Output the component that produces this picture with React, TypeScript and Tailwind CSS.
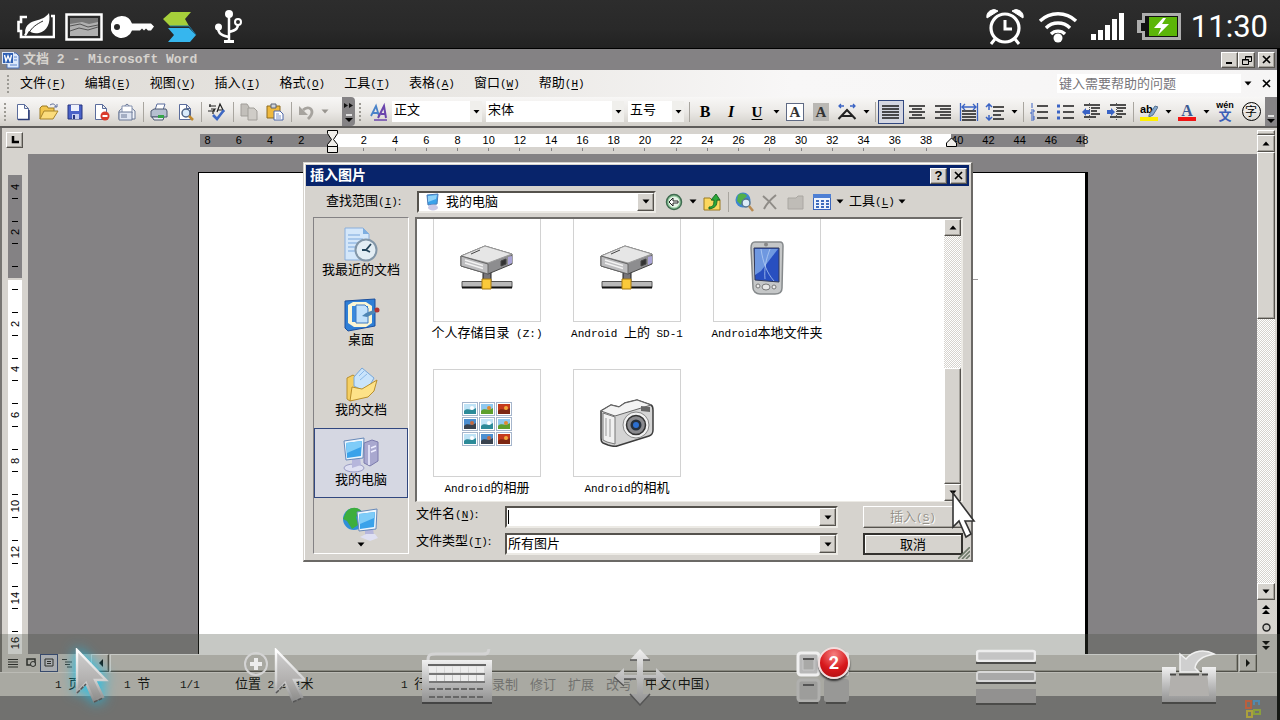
import type { ReactNode } from "react";

const RAISED =
  "border border-t-white border-l-white border-r-[#55524d] border-b-[#55524d] bg-[#d6d3ce] shadow-[inset_-1px_-1px_0_#a5a29c]";
const SUNKEN = "border-2 border-t-[#55524d] border-l-[#55524d] border-r-[#eceae5] border-b-[#eceae5] bg-white";
const DOTTED = "bg-[repeating-conic-gradient(#ffffff_0%_25%,#d6d3ce_0%_50%)] bg-[length:2px_2px]";
const CN = "font-['Liberation_Serif','Noto_Sans_CJK_SC',sans-serif]";

type Kids = { children?: ReactNode };

function Draw({ w, h, children, label }: Kids & { w: number; h: number; label?: string }) {
  return (
    <svg width={w} height={h} viewBox={`0 0 ${w} ${h}`} fill="none" aria-label={label} className="block shrink-0">
      {children}
    </svg>
  );
}

function Key({ k }: { k: string }) {
  return (
    <span className="font-['Liberation_Mono',monospace] text-[11px]">
      (<span className="underline underline-offset-2">{k}</span>)
    </span>
  );
}

/* Latin runs are set in the half-width face, Chinese runs in the full-width one. */
function Mixed({ text }: { text: string }) {
  return (
    <>
      {text.split(/([\x20-\x7e]+)/).map((part, i) =>
        i % 2 ? (
          <span key={i} className="whitespace-pre font-['Liberation_Mono',monospace] text-[11px]">
            {part}
          </span>
        ) : (
          part
        ),
      )}
    </>
  );
}

function Down({ color = "#000" }: { color?: string }) {
  return (
    <Draw w={8} h={5}>
      <path d="M0.5 0.5h7L4 4.5z" fill={color} />
    </Draw>
  );
}

function Up() {
  return (
    <Draw w={8} h={5}>
      <path d="M0.5 4.5h7L4 0.5z" fill="#000" />
    </Draw>
  );
}

/* ---------- device status bar ---------- */

function DeviceBar() {
  return (
    <header className="flex h-[49px] shrink-0 items-center border-b border-black bg-[linear-gradient(#2d2d2d,#292929_60%,#222)] pl-[17px] pr-3 pt-[5px]">
      <div className="flex flex-1 items-center">
        <Draw w={38} h={28} label="Power saver">
          <path d="M10 4H4v5H1.5v9H4v6h33V3h-3" stroke="#fff" strokeWidth="2.6" />
          <path d="M8 20c0-9 6-11 13-13 5-1.500 8-3 11-7 2 10-2 18-10 20-5 1-8-.500-10-2l-3 5-2-1 3-5z" fill="#fff" />
          <path d="M12 20c3-6 8-9 14-12" stroke="#292929" strokeWidth="1" />
        </Draw>
        <div className="ml-[10px]">
          <Draw w={38} h={28} label="Gallery">
            <rect x="1.500" y="1.500" width="35" height="25" stroke="#fff" strokeWidth="2.500" />
            <rect x="5" y="5" width="28" height="18" fill="#b0b0b0" />
            <path d="M5 5h28v4l-9 2-7-2-12 2z" fill="#777" />
            <path d="M5 13l10-2 8 3 10-2M5 18l9-3 9 2 10-3" stroke="#555" />
          </Draw>
        </div>
        <div className="ml-[8px]">
          <Draw w={43} h={24} label="Key">
            <path d="M11 1a11 11 0 1 0 10 14.500h8l2-2 2 2 2-2 2 2h3l3-4-3-3H21A11 11 0 0 0 11 1z" fill="#fff" />
            <circle cx="6" cy="12" r="3" fill="#292929" />
          </Draw>
        </div>
        <div className="ml-[9px]">
          <Draw w={34} h={32} label="Sync">
            <path d="M8 1h20l-6 7 4 7H7L0 8z" fill="#a6cf3a" />
            <path d="M5 17h21l7 7-6 7H5l6-7z" fill="#36b6ee" />
            <path d="M7 15h19l7 9" stroke="#1d7da8" />
          </Draw>
        </div>
        <div className="ml-[18px]">
          <Draw w={28} h={34} label="USB">
            <path d="M14 5v27M14 27C4 25 3 22 3 17M14 22c8-2 9-4 9-8" stroke="#fff" strokeWidth="2.500" />
            <circle cx="14" cy="4" r="4" fill="#fff" />
            <circle cx="3.500" cy="17" r="3.500" fill="#fff" />
            <circle cx="23" cy="12" r="3" stroke="#fff" strokeWidth="2" />
            <path d="M9 31.500h10" stroke="#fff" strokeWidth="3" />
          </Draw>
        </div>
      </div>
      <Draw w={38} h={38} label="Alarm">
        <circle cx="19" cy="20" r="14" stroke="#fff" strokeWidth="3.200" />
        <path d="M19 12v9h7M9 31l-4 5M29 31l4 5" stroke="#fff" strokeWidth="3" />
        <path d="M1 10A7 7 0 0 1 12 3zM37 10A7 7 0 0 0 26 3z" fill="#fff" stroke="#fff" />
      </Draw>
      <div className="ml-[14px]">
        <Draw w={40} h={34} label="Wi-Fi">
          <path d="M2 11a26 26 0 0 1 36 0M8 18a17 17 0 0 1 24 0M13 24a10 10 0 0 1 14 0" stroke="#fff" strokeWidth="3.400" />
          <circle cx="20" cy="28" r="4.500" fill="#fff" />
        </Draw>
      </div>
      <div className="ml-[13px]">
        <Draw w={34} h={28} label="Signal">
          <path d="M0 21h5v6H0zM7 17h5v10H7zM14 12h5v15h-5zM21 6h5v21h-5zM28 0h5v27h-5z" fill="#fff" />
        </Draw>
      </div>
      <div className="ml-[12px]">
        <Draw w={44} h={27} label="Charging">
          <path d="M5 0h39v27H5v-7H0V7h5z" fill="#adadad" />
          <path d="M8 3h33v21H8v-6H4v-8h4z" fill="#111" />
          <path d="M12 4h28v19H12z" fill="#5cb508" />
          <path d="M26 5l-9 10h7l-3 7 11-11h-7l4-6z" fill="#fff" />
        </Draw>
      </div>
      <time className="ml-[10px] font-['Roboto',sans-serif] text-[31px] leading-[40px] text-white">11:30</time>
    </header>
  );
}

/* ---------- title + menus ---------- */

function CaptionButton({ label, children }: Kids & { label: string }) {
  return (
    <button aria-label={label} className={`flex h-[16px] w-[17px] items-center justify-center ${RAISED}`}>
      {children}
    </button>
  );
}

function Cross({ s = 9 }: { s?: number }) {
  return (
    <svg width={s} height={s} viewBox="0 0 9 9" className="block">
      <path d="M1 1l7 7M8 1L1 8" stroke="#000" strokeWidth="1.700" />
    </svg>
  );
}

function TitleBar() {
  return (
    <div className="flex h-[21px] shrink-0 items-center bg-[#848284] pl-[2px] pr-[2px]">
      <Draw w={18} h={18}>
        <path d="M5 2h9l3 3v12H5z" fill="#dce9fb" stroke="#4a70b8" />
        <path d="M12 6h3M12 9h3M8 14h7" stroke="#5c84cc" />
        <rect x="0.500" y="1.500" width="11" height="11" fill="#2f60b4" stroke="#dce6f6" />
        <path d="M2.500 4l1.500 6 2-5 2 5 1.500-6" stroke="#fff" strokeWidth="1.400" />
      </Draw>
      <h1 className="ml-[3px] flex-1 font-['Liberation_Mono','Noto_Sans_CJK_SC',monospace] text-[13px] font-bold leading-[20px] text-[#d6d3ce]">
        文档 2 - Microsoft Word
      </h1>
      <CaptionButton label="最小化">
        <Draw w={9} h={9}>
          <path d="M1 8h6" stroke="#000" strokeWidth="2" />
        </Draw>
      </CaptionButton>
      <CaptionButton label="还原">
        <Draw w={10} h={10}>
          <path d="M3.500 4V1.500h6v5H7M3 2h7M0.500 4.500h6v5h-6zM0 5h7" stroke="#000" />
        </Draw>
      </CaptionButton>
      <div className="ml-[3px]">
        <CaptionButton label="关闭">
          <Cross />
        </CaptionButton>
      </div>
    </div>
  );
}

const MENUS = [
  ["文件", "F"],
  ["编辑", "E"],
  ["视图", "V"],
  ["插入", "I"],
  ["格式", "O"],
  ["工具", "T"],
  ["表格", "A"],
  ["窗口", "W"],
  ["帮助", "H"],
];

function Grip() {
  return (
    <span className="flex w-[10px] shrink-0 justify-center">
      <span className="h-[18px] w-[2px] bg-[repeating-linear-gradient(#9c9a94_0_2px,transparent_2px_4px)]" />
    </span>
  );
}

function MenuBar() {
  return (
    <nav className="flex h-[27px] shrink-0 items-center bg-[linear-gradient(to_right,#dedbd6,#ebe9e6_40%,#f8f7f7_62%,#f6f5f5)] pl-[3px]">
      <Grip />
      <div className="ml-[7px] flex flex-1 gap-[19px]">
        {MENUS.map(([name, key]) => (
          <button key={key} className="whitespace-nowrap text-[13px] leading-[20px]">
            {name}
            <Key k={key} />
          </button>
        ))}
      </div>
      <input
        aria-label="帮助搜索"
        placeholder="键入需要帮助的问题"
        className="h-[19px] w-[184px] bg-white pl-[2px] text-[13px] leading-[19px] outline-none placeholder:text-[#77757a]"
      />
      <button aria-label="问题列表" className="flex w-[14px] justify-center">
        <Down />
      </button>
      <button aria-label="关闭文档" className="flex w-[22px] justify-center">
        <Cross />
      </button>
    </nav>
  );
}

/* ---------- toolbar ---------- */

function Tool({ label, children, pressed, arrow }: Kids & { label: string; pressed?: boolean; arrow?: boolean }) {
  return (
    <>
      <button
        aria-label={label}
        className={
          pressed
            ? "flex h-[24px] w-[26px] shrink-0 items-center justify-center border border-[#31477f] bg-[#d5d7e2]"
            : "flex h-[24px] w-[26px] shrink-0 items-center justify-center"
        }
      >
        {children}
      </button>
      {arrow && (
        <button aria-label={`${label}选项`} className="flex w-[12px] shrink-0 justify-center">
          <Draw w={7} h={4}>
            <path d="M0.500 0h6L3.500 3.500z" fill="#000" />
          </Draw>
        </button>
      )}
    </>
  );
}

function Sep() {
  return (
    <span className="flex w-[6px] shrink-0 justify-center">
      <span className="h-[20px] w-px bg-[#a8a59f]" />
    </span>
  );
}

function BarSelect({ label, value, size }: { label: string; value: string; size: string }) {
  return (
    <span className={`grid h-[21px] shrink-0 grid-cols-[1fr_12px] items-center bg-white ${size}`}>
      <select
        aria-label={label}
        className="col-span-2 col-start-1 row-start-1 h-[21px] w-full appearance-none bg-transparent pb-[3px] pl-[2px] text-[13px] leading-[18px] outline-none"
      >
        <option>{value}</option>
      </select>
      <span className="pointer-events-none col-start-2 row-start-1 flex h-full items-center justify-center bg-[#f0efec]">
        <Draw w={7} h={4}>
          <path d="M0.500 0h6L3.500 3.500z" fill="#000" />
        </Draw>
      </span>
    </span>
  );
}

function Sheet() {
  return <path d="M4.500 2.500h7l4 4v11h-11z M11.500 2.500v4h4" fill="#fff" stroke="#5a6c9c" />;
}

function Lines({ d, extra }: { d: string; extra?: ReactNode }) {
  return (
    <Draw w={20} h={18}>
      <path d={d} stroke="#1a1a1a" strokeWidth="1.600" />
      {extra}
    </Draw>
  );
}

function ToolBar() {
  return (
    <div className="flex h-[31px] shrink-0 items-center overflow-hidden border-b-2 border-[#5e5c5a] bg-[linear-gradient(#f8f7f6,#ebe9e6_50%,#d2cfc9)]">
      <Grip />
      <Tool label="新建"><Draw w={20} h={20}><Sheet /><path d="M5 17.500h11V8" stroke="#2c3d77" strokeWidth="1.500" /></Draw></Tool>
      <Tool label="打开">
        <Draw w={20} h={20}>
          <path d="M1 17V6l2-2h5l1 2h6v3" fill="#f2c64e" stroke="#9c7a22" />
          <path d="M1 17L5 9h14l-5 8z" fill="#fbdc7c" stroke="#a8842a" />
          <path d="M11 3c3-2 5-1 6 2M15 5h3V2" stroke="#5f6f9c" />
        </Draw>
      </Tool>
      <Tool label="保存">
        <Draw w={20} h={20}>
          <path d="M3 3h14v14H3z" fill="#4a62c8" stroke="#27357f" />
          <path d="M6 3h8v6H6z" fill="#eef1fb" />
          <path d="M7 12h7v5H7z" fill="#c5cdef" />
          <path d="M8 13h2v4H8z" fill="#27357f" />
        </Draw>
      </Tool>
      <Tool label="权限"><Draw w={20} h={20}><Sheet /><circle cx="14" cy="14" r="4.500" fill="#d83a2c" /><path d="M11.500 14h5" stroke="#fff" strokeWidth="2" /></Draw></Tool>
      <Tool label="电子邮件">
        <Draw w={20} h={20}>
          <path d="M2 9l8-7 8 7v8H2z" fill="#f3f5fa" stroke="#6b7896" />
          <path d="M5 4h10v7H5z" fill="#fff" stroke="#8390ae" />
          <path d="M2 10h13v8H2z" fill="#dfe5f1" stroke="#6b7896" />
          <path d="M4 13h6M4 15h6" stroke="#6b7896" />
        </Draw>
      </Tool>
      <Sep />
      <Tool label="打印">
        <Draw w={20} h={20}>
          <path d="M6 8l2-6h8l-2 6z" fill="#fff" stroke="#5a6c9c" />
          <path d="M2 9l3-2h12l1 2v6H2z" fill="#b5bfd0" stroke="#4c5870" />
          <path d="M3 15h12l-1 3H5z" fill="#e7ecf4" stroke="#4c5870" />
          <path d="M9 13h6v3H9z" fill="#35a548" />
        </Draw>
      </Tool>
      <Tool label="打印预览">
        <Draw w={20} h={20}>
          <Sheet />
          <circle cx="11" cy="11" r="4" fill="#d9ebfb" stroke="#4f6384" strokeWidth="1.500" />
          <path d="M14 14l4 4" stroke="#c28a2e" strokeWidth="2.500" />
        </Draw>
      </Tool>
      <Sep />
      <Tool label="拼写检查">
        <Draw w={20} h={20}>
          <path d="M2 4h7M3 2v3M4 7h4l-2 2v3M1 9h7M10 10l3-8 4 8M11 8h5" stroke="#222" strokeWidth="1.200" />
          <path d="M6 13l4 4 7-9" stroke="#3d68c4" strokeWidth="2.600" />
        </Draw>
      </Tool>
      <Sep />
      <Tool label="复制">
        <Draw w={20} h={20}>
          <path d="M2 2h6l2 3v9H2z" fill="#c2bfba" stroke="#a19e99" />
          <path d="M9 6h6l3 3v9H9z" fill="#cfccc7" stroke="#a19e99" />
        </Draw>
      </Tool>
      <Tool label="粘贴">
        <Draw w={20} h={20}>
          <path d="M2 4h13v12H2z" fill="#efb93e" stroke="#8d6b1f" />
          <path d="M6 2h5v4H6z" fill="#cfd4dc" stroke="#5c6474" />
          <path d="M9 9h6l3 3v6H9z" fill="#fff" stroke="#4c66a8" />
          <path d="M11 12h3M11 14h5M11 16h5" stroke="#7e95c8" />
        </Draw>
      </Tool>
      <Sep />
      <button aria-label="撤消" className="flex w-[24px] shrink-0 justify-center">
        <Draw w={16} h={16}>
          <path d="M5 6c4-4 9-2 9 2 0 3-2 5-4 7" stroke="#a6a39e" strokeWidth="2.800" />
          <path d="M1 2v9h9z" fill="#a6a39e" />
        </Draw>
      </button>
      <span className="flex w-[14px] shrink-0 justify-center"><Down color="#98958f" /></span>
      <button aria-label="更多按钮" className="ml-[10px] flex h-full w-[13px] shrink-0 flex-col items-center justify-end gap-[6px] rounded-r bg-[#858385] pb-[4px]">
        <Draw w={9} h={5}><path d="M0 0l4 2.500L0 5zM5 0l4 2.500L5 5z" fill="#111" /></Draw>
        <Draw w={8} h={8}><path d="M1 1h6" stroke="#fff" strokeWidth="1.500" /><path d="M0 4h8L4 8z" fill="#000" /></Draw>
      </button>
      <Grip />
      <button aria-label="样式和格式" className="flex w-[27px] shrink-0 justify-center">
        <Draw w={20} h={20}>
          <path d="M2 14l5-10 3 10M4 11h5" stroke="#4a83c9" strokeWidth="1.800" />
          <path d="M9 16l6-12 2 12M12 12h5" stroke="#6a45ac" strokeWidth="2" />
          <path d="M5 18h13" stroke="#6a45ac" strokeWidth="1.500" />
        </Draw>
      </button>
      <BarSelect label="样式" value="正文" size="w-[90px]" />
      <span className="w-[4px] shrink-0" />
      <BarSelect label="字体" value="宋体" size="w-[138px]" />
      <span className="w-[4px] shrink-0" />
      <BarSelect label="字号" value="五号" size="w-[56px]" />
      <span className="w-[2px] shrink-0" />
      <Sep />
      <Tool label="加粗"><b className="font-['Liberation_Serif',serif] text-[16px] font-black leading-[20px]">B</b></Tool>
      <Tool label="倾斜"><i className="font-['Liberation_Serif',serif] text-[16px] font-bold leading-[20px]">I</i></Tool>
      <Tool label="下划线" arrow><span className="font-['Liberation_Serif',serif] text-[15px] font-bold leading-[20px] underline underline-offset-2">U</span></Tool>
      <Tool label="字符边框">
        <span className="h-[18px] w-[18px] border border-[#5f6a84] bg-white text-center font-['Liberation_Serif',serif] text-[15px] font-bold leading-[16px] text-[#333]">A</span>
      </Tool>
      <Tool label="字符底纹">
        <span className="h-[18px] w-[16px] bg-[#bab8b4] text-center font-['Liberation_Serif',serif] text-[15px] font-bold leading-[18px] text-[#333]">A</span>
      </Tool>
      <Tool label="字符缩放" arrow>
        <Draw w={20} h={18}>
          <path d="M1.500 16L10 7l8.500 9M5 13h10" stroke="#222" strokeWidth="2" />
          <path d="M2 3h5M13 3h5M4 1L2 3l2 2M16 1l2 2-2 2" stroke="#3a63c4" strokeWidth="1.300" />
        </Draw>
      </Tool>
      <Sep />
      <Tool label="两端对齐" pressed><Lines d="M1 3h17M1 6h17M1 9h17M1 12h17M1 15h17" /></Tool>
      <Tool label="居中"><Lines d="M2 3h16M5 6h10M2 9h16M5 12h10M2 15h16" /></Tool>
      <Tool label="右对齐"><Lines d="M2 3h16M7 6h11M2 9h16M7 12h11M2 15h16" /></Tool>
      <Tool label="分散对齐">
        <Lines d="M3 8h14M3 11h14M3 14h14M3 17h14" extra={<path d="M1.500 0v18M18.500 0v18M3 4h14M6 1L3 4l3 3M14 1l3 3-3 3" stroke="#3a63c4" strokeWidth="1.300" />} />
      </Tool>
      <Tool label="行距" arrow>
        <Lines d="M8 4h11M8 8h11M8 12h8M8 16h11" extra={<path d="M4 2v5M4 12v5M1 4l3-3 3 3M1 14l3 3 3-3" stroke="#3a63c4" strokeWidth="1.500" />} />
      </Tool>
      <Sep />
      <Tool label="编号"><Lines d="M8 3h11M8 9h11M8 15h11" extra={<path d="M3 0v5M2 7h3v2H2v2h3M2 13h3v4H2M2 15h3" stroke="#3a63c4" />} /></Tool>
      <Tool label="项目符号">
        <Lines d="M8 3h11M8 9h11M8 15h11" extra={<path d="M2 1.500h3v3H2zM2 7.500h3v3H2zM2 13.500h3v3H2z" fill="#3a63c4" />} />
      </Tool>
      <Tool label="减少缩进">
        <Lines
          d="M3 2h16M10 5h9M10 8h6M10 11h9M3 14h12"
          extra={<><path d="M8.500 0v18" stroke="#555" strokeDasharray="1 1" /><path d="M9 7v4H5v2L1 9l4-4v2z" fill="#3a63c4" /></>}
        />
      </Tool>
      <Tool label="增加缩进">
        <Lines
          d="M3 2h16M10 5h9M10 8h6M10 11h9M3 14h12"
          extra={<><path d="M9.500 0v18" stroke="#555" strokeDasharray="1 1" /><path d="M0 7v4h4v2l4-4-4-4v2z" fill="#3a63c4" /></>}
        />
      </Tool>
      <Sep />
      <Tool label="突出显示" arrow>
        <span className="grid">
          <span className="col-start-1 row-start-1 h-[14px] text-left font-['Liberation_Sans',sans-serif] text-[11px] font-bold leading-[12px]">ab</span>
          <span className="col-start-1 row-start-1">
            <Draw w={18} h={18}>
              <path d="M9 12l6-9 3 1-5 8-4 2z" fill="#86a8cf" stroke="#55708e" />
              <path d="M0 14h18v4H0z" fill="#ffef00" />
            </Draw>
          </span>
        </span>
      </Tool>
      <Tool label="字体颜色" arrow>
        <span className="flex flex-col items-center">
          <span className="h-[14px] font-['Liberation_Serif',serif] text-[16px] font-bold leading-[15px] text-[#3c5a94]">A</span>
          <span className="h-[4px] w-[18px] bg-[#f01414]" />
        </span>
      </Tool>
      <Tool label="拼音指南">
        <span className="flex flex-col items-center">
          <span className="h-[8px] font-['Liberation_Sans',sans-serif] text-[9px] font-bold leading-[7px]">wén</span>
          <span className="text-[13px] font-bold leading-[12px] text-[#3b5fb8]">文</span>
        </span>
      </Tool>
      <Tool label="带圈字符">
        <span className="flex h-[19px] w-[19px] items-center justify-center rounded-full border border-black text-[12px] leading-[16px]">字</span>
      </Tool>
      <button aria-label="工具栏选项" className="ml-auto flex h-full w-[12px] shrink-0 flex-col items-center justify-end bg-[#858385] pb-[3px]">
        <Draw w={8} h={8}><path d="M1 1h6" stroke="#fff" strokeWidth="1.500" /><path d="M0 4h8L4 8z" fill="#000" /></Draw>
      </button>
    </div>
  );
}

/* ---------- rulers and page ---------- */

const H_MARKS = Array.from({ length: 29 }, (_, i) => (i - 4) * 2);
const V_MARKS = Array.from({ length: 11 }, (_, i) => (i - 2) * 2);

function HorizontalRuler() {
  return (
    <div className="flex h-[26px] shrink-0">
      <div className="w-[198px] shrink-0 pl-[4px] pt-[4px]">
        <button aria-label="制表符" className={`flex h-[16px] w-[17px] items-center justify-center ${RAISED}`}>
          <Draw w={8} h={8}><path d="M2 0v6h6" stroke="#000" strokeWidth="2.500" /></Draw>
        </button>
      </div>
      <div className="relative mt-[6px] h-[13px] w-[885px] shrink-0 bg-[linear-gradient(to_right,#848284_132px,#fff_132px,#fff_751px,#848284_751px)]">
        <div className="-ml-2 -mr-[13px] flex">
          {H_MARKS.map((n) => (
            <div key={n} className="flex flex-1 flex-col items-center">
              <span className="h-[14px] font-['Liberation_Sans',sans-serif] text-[11px] leading-[13px] text-black">{n === 0 ? "" : Math.abs(n)}</span>
              <span className={n > 0 && n < 40 ? "h-[3px] w-px bg-[#848284]" : "h-[3px]"} />
            </div>
          ))}
        </div>
        <span className="absolute -top-[4px] left-[127px]">
          <Draw w={11} h={24}>
            <path d="M0.500 0.500h10v3l-4 6 4 5v2h-10v-2l4-5-4-6zM0.500 16.500h10v6h-10z" fill="#f0eeea" stroke="#000" />
          </Draw>
        </span>
        <span className="absolute left-[746px] top-[3px]">
          <Draw w={11} h={10}><path d="M0.500 9.500V6L5.500 1l5 5v3.500z" fill="#f0eeea" stroke="#000" /></Draw>
        </span>
      </div>
    </div>
  );
}

function VerticalRuler() {
  return (
    <div className="w-[26px] shrink-0 overflow-hidden pl-[6px] pt-[21px]">
      <div className="h-[490px] w-[14px] overflow-hidden bg-[linear-gradient(#848284_103px,#d6d3ce_103px,#d6d3ce_105px,#fff_105px)]">
        <div className="-mt-[11px] flex h-[502px] flex-col">
          {V_MARKS.map((n, i) => (
            <div key={n} className="flex flex-1 flex-col items-center justify-between py-[11px]">
              <span className={i === 0 ? "h-px w-[6px]" : "h-px w-[6px] bg-black"} />
              <span className="flex h-[8px] -rotate-90 items-center font-['Liberation_Sans',sans-serif] text-[11px] leading-[8px]">
                {n === 0 ? "" : Math.abs(n)}
              </span>
              <span className="h-px w-[6px] bg-black" />
            </div>
          ))}
        </div>
      </div>
    </div>
  );
}

function VerticalScroll() {
  return (
    <div className="flex w-[18px] shrink-0 flex-col bg-[#d6d3ce]">
      <span className={`mt-[2px] h-[5px] ${RAISED}`} />
      <button aria-label="向上滚动" className={`flex h-[17px] items-center justify-center ${RAISED}`}><Up /></button>
      <div className={`min-h-0 flex-1 ${DOTTED}`}>
        <div className={`h-[167px] ${RAISED}`} />
      </div>
      <button aria-label="向下滚动" className={`flex h-[17px] items-center justify-center ${RAISED}`}><Down /></button>
      <button aria-label="上一页" className="flex h-[18px] items-center justify-center">
        <Draw w={8} h={9}><path d="M0 4l4-4 4 4zM0 9l4-4 4 4z" fill="#000" /></Draw>
      </button>
      <button aria-label="选择浏览对象" className="flex h-[18px] items-center justify-center">
        <Draw w={9} h={9}><circle cx="4.500" cy="4.500" r="3.500" fill="#c9c7c3" stroke="#222" strokeWidth="1.400" /></Draw>
      </button>
      <button aria-label="下一页" className="flex h-[18px] items-center justify-center">
        <Draw w={8} h={9}><path d="M0 0l4 4 4-4zM0 5l4 4 4-4z" fill="#000" /></Draw>
      </button>
    </div>
  );
}

function WorkArea() {
  return (
    <div className="flex min-h-0 flex-1 pr-[2px]">
      <div className="flex min-w-0 flex-1 flex-col overflow-hidden">
        <HorizontalRuler />
        <div className="flex min-h-0 flex-1">
          <VerticalRuler />
          <main className="flex min-w-0 flex-1 bg-[#848284] pl-[170px] pr-[169px] pt-[18px]">
            <article className="flex-1 border-l border-r-[3px] border-t border-black bg-white pt-[106px]">
              <div className="ml-auto mr-[107px] h-px w-[30px] bg-[#9c9a9c]" />
            </article>
          </main>
        </div>
      </div>
      <VerticalScroll />
    </div>
  );
}

function ViewBar() {
  return (
    <div className="flex h-[18px] shrink-0 items-stretch bg-[#d6d3ce] pl-[2px]">
      <button aria-label="普通视图" className="flex w-[18px] items-center justify-center">
        <Draw w={10} h={10}><path d="M0 1.500h10M0 4h10M0 6.500h10M0 9h10" stroke="#222" /></Draw>
      </button>
      <button aria-label="Web 版式" className="flex w-[18px] items-center justify-center">
        <Draw w={10} h={10}><path d="M1 1h8v6H1z" stroke="#222" strokeWidth="1.500" /><circle cx="7" cy="6" r="2.500" fill="#ddd" stroke="#222" /></Draw>
      </button>
      <button aria-label="页面视图" className="flex w-[18px] items-center justify-center border border-[#31477f] bg-[#d5d7e2]">
        <Draw w={10} h={10}><path d="M1 1h8v7H1zM3 3.500h4M3 5.500h4" stroke="#222" /></Draw>
      </button>
      <button aria-label="大纲视图" className="flex w-[18px] items-center justify-center">
        <Draw w={10} h={10}><path d="M0 1.500h5M3 4h7M3 6.500h5M5 9h5" stroke="#333" /></Draw>
      </button>
      <span className="w-[15px]" />
      <button aria-label="向左滚动" className={`flex w-[18px] items-center justify-center ${RAISED}`}>
        <Draw w={5} h={8}><path d="M5 0v8L1 4z" fill="#000" /></Draw>
      </button>
      <div className={`mx-[1px] flex-1 ${RAISED}`} />
      <button aria-label="向右滚动" className={`mr-[20px] flex w-[18px] items-center justify-center ${RAISED}`}>
        <Draw w={5} h={8}><path d="M0 0v8l4-4z" fill="#000" /></Draw>
      </button>
    </div>
  );
}

function StatusBar() {
  return (
    <footer className="flex h-[24px] shrink-0 items-center whitespace-nowrap border-t border-[#efede9] bg-[#d6d3ce] pl-[55px] text-[13px] leading-[20px]">
      <span className="w-[69px]"><Mixed text="1 页" /></span>
      <span className="w-[56px]"><Mixed text="1 节" /></span>
      <span className="w-[55px]"><Mixed text="1/1" /></span>
      <span className="w-[166px]"><Mixed text="位置 2.5厘米" /></span>
      <span className="w-[47px]"><Mixed text="1 行" /></span>
      <span className="w-[44px]"><Mixed text="1 列" /></span>
      <span className="flex gap-[12px] text-[#848284]">
        <span>录制</span>
        <span>修订</span>
        <span>扩展</span>
        <span>改写</span>
      </span>
      <span className="ml-[13px]"><Mixed text="中文(中国)" /></span>
    </footer>
  );
}

/* ---------- insert picture dialog ---------- */

function Computer({ globe }: { globe?: boolean }) {
  return (
    <Draw w={38} h={36}>
      {globe ? (
        <>
          <circle cx="12" cy="13" r="11" fill="#2f8fd8" />
          <path d="M4 6c5-6 12-5 15-1l-5 6 2 8-6 4-5-8-4-2z" fill="#3dae3c" />
        </>
      ) : (
        <>
          <path d="M22 6l8-3 6 2v19l-8 5-6-3z" fill="#a9a8cf" stroke="#7c7bac" />
          <path d="M27 8v20M29 11l5-2M29 15l5-2" stroke="#eef" strokeWidth="1.500" />
          <ellipse cx="12" cy="31" rx="10" ry="4" fill="#dfe0f2" stroke="#9a9cc4" />
        </>
      )}
      <g transform={globe ? "translate(13 2)" : undefined}>
        <path d="M10 20h8l1 8-9 3z" fill="#b6b6dc" />
        <path d="M2 4l20-3-1 20-17 2z" fill="#eef6fd" stroke="#6688b8" />
        <path d="M4 6l16-2-1 15-14 2z" fill="#3aa2ea" />
        <path d="M4 6l16-2-1 6-14 6z" fill="#7fccf8" />
        {globe && <path d="M5 29l6-3h9l3 4-8 3z" fill="#dfe0f2" />}
      </g>
    </Draw>
  );
}

function RecentIcon() {
  return (
    <Draw w={38} h={36}>
      <path d="M3 1h18l6 6v26H3z" fill="#d4e7fa" stroke="#8aaedb" />
      <path d="M21 1v6h6z" fill="#7eaee0" />
      <path d="M6 8h12M6 12h15M6 16h12M6 20h10M6 24h10" stroke="#7ba7dc" />
      <circle cx="24" cy="23" r="10.500" fill="#e3edf4" stroke="#8296a8" strokeWidth="2" />
      <path d="M29 17l-5 6h-4M24 23l4 2" stroke="#24445a" strokeWidth="1.800" />
    </Draw>
  );
}

function DesktopIcon() {
  return (
    <Draw w={38} h={36}>
      <path d="M3 4l30-2v27L6 34l-3-3z" fill="#2f7fd6" stroke="#1c4f9c" />
      <path d="M6 8l5-3h13l6 4v17l-6 4H12l-6-4z" fill="#fbf6d4" />
      <path d="M10 9h16v16H10z" fill="#3a8ade" />
      <path d="M14 8h9l3 3v15H14z" fill="#c2e2fc" stroke="#3c78c0" />
      <path d="M34 12l-10 4-4 3 5 1 10-5z" fill="#4f86b4" />
      <circle cx="35" cy="13" r="2.500" fill="#b03434" />
    </Draw>
  );
}

function DocsIcon() {
  return (
    <Draw w={38} h={36}>
      <path d="M5 11l6-3 4 3 10-3v12L8 34l-3-2z" fill="#f5cf62" stroke="#b98f2c" />
      <path d="M12 10l8-9 12 10-8 14-12-6z" fill="#c9e4fb" stroke="#79a7d8" />
      <path d="M17 9l5-5M18 13l7-6" stroke="#8bb9e8" />
      <path d="M8 34l2-14 10 2 15-9-3 11-6 6z" fill="#fde288" stroke="#b98f2c" />
    </Draw>
  );
}

function Place({ name, icon, active }: { name: string; icon: ReactNode; active?: boolean }) {
  return (
    <button
      className={
        active
          ? "flex h-[70px] flex-col items-center border border-[#31477f] bg-[#d5d7e2] pt-[8px]"
          : "flex h-[70px] flex-col items-center pt-[9px]"
      }
    >
      {icon}
      <span className="-mt-[1px] whitespace-nowrap text-[13px] leading-[16px]">{name}</span>
    </button>
  );
}

function DriveIcon() {
  return (
    <Draw w={54} h={46}>
      <path d="M23 26h8v10h-8z" fill="#77757a" stroke="#222" />
      <path d="M2 36.500h50v6H2z" fill="#b9b9b9" stroke="#555" />
      <path d="M2 42.500h50" stroke="#111" strokeWidth="2" />
      <path d="M22 34h9v10h-9z" fill="#fbca3a" stroke="#a87a10" />
      <path d="M1 11L25 1l27 8v10L28 29 1 21z" fill="#8d8d8f" stroke="#444" />
      <path d="M1 11L25 1l27 8-24 9z" fill="#e6e6e6" stroke="#9a9a9a" />
      <path d="M1 11l27 8v10L1 21z" fill="#bdbdbf" stroke="#666" />
      <path d="M5 15l18 5.500M5 18l18 5.500" stroke="#f2f2f2" strokeWidth="1.500" />
      <path d="M11 9l9-4M41 16l5-2v5l-5 2z" stroke="#444" fill="#333" />
      <path d="M48 12l4-1v7l-4 2z" fill="#a9a3d6" />
    </Draw>
  );
}

function PhoneIcon() {
  return (
    <Draw w={36} h={54}>
      <path d="M6 1h25c2 0 3 2 3 4l-1 42c0 4-3 6-7 6H11c-4 0-7-3-7-6L2 7c0-4 1-6 4-6z" fill="#c5c7c8" stroke="#868a8c" strokeWidth="1.500" />
      <circle cx="17" cy="3.500" r="2" fill="#888" />
      <path d="M5 7h25v34L6 39z" fill="#284fc0" stroke="#333b58" />
      <path d="M6 8h23L12 30l-6 4z" fill="#6f98e0" />
      <path d="M12 8c2 14 6 24 13 32M21 8c-4 10-6 20-5 30" stroke="#bcd4f6" opacity=".7" />
      <ellipse cx="17" cy="46" rx="4" ry="3" fill="#e8e8e8" stroke="#777" />
      <circle cx="9" cy="45" r="2" fill="#eee" stroke="#777" />
      <circle cx="25" cy="46" r="2" fill="#eee" stroke="#777" />
    </Draw>
  );
}

const PHOTOS = ["sea", "green", "red", "dusk", "sea", "green", "sea", "dusk", "red"];
const PHOTO_COLORS: Record<string, [string, string, string]> = {
  sea: ["#bfe3f6", "#2c8a98", "#ffffff"],
  green: ["#8fc8ef", "#5d9f2c", "#e08a30"],
  red: ["#c43a1c", "#7c2612", "#f0a93c"],
  dusk: ["#4b8ed0", "#39424e", "#c46a40"],
};

function AlbumIcon() {
  return (
    <Draw w={52} h={46}>
      {PHOTOS.map((kind, i) => {
        const [sky, land, spot] = PHOTO_COLORS[kind];
        return (
          <g key={i} transform={`translate(${(i % 3) * 17 + 1} ${Math.floor(i / 3) * 15 + 2})`}>
            <rect x="0.500" y="0.500" width="15" height="13" fill="#fff" stroke="#a6b6cc" />
            <rect x="2" y="2" width="12" height="10" fill={sky} />
            <path d="M2 9c4-4 7 1 12-3v6H2z" fill={land} />
            <circle cx="10" cy="6" r="2" fill={spot} />
          </g>
        );
      })}
    </Draw>
  );
}

function CameraIcon() {
  return (
    <Draw w={56} h={48}>
      <path d="M2 12l10-6 8 2 6-4 12-3 14 5c2 1 2 3 2 5v20c0 3-1 5-4 6L18 47c-3 1-6 0-9-1l-5-2c-2-1-2-3-2-5z" fill="#d4d4d4" stroke="#3d3d3d" strokeWidth="1.500" />
      <path d="M2 12l10-6 8 2 6-4 12-3 14 5-36 11z" fill="#f3f3f3" stroke="#666" />
      <path d="M4 14l12 4v27l-8-2-4-2z" fill="#f0f0f0" stroke="#777" />
      <path d="M7 19v18M11 20v18" stroke="#999" />
      <path d="M42 7l9 1v5l-9-1z" fill="#666" />
      <circle cx="37" cy="26" r="13" fill="#f2f2f2" stroke="#888" />
      <circle cx="37" cy="26" r="9.500" fill="#8a8a8e" stroke="#333" strokeWidth="1.500" />
      <circle cx="37" cy="26" r="5.500" fill="#26303c" />
      <circle cx="37" cy="26" r="3" fill="#2c6fd0" />
    </Draw>
  );
}

const FILES: { name: string; icon: ReactNode }[] = [
  { name: "个人存储目录 (Z:)", icon: <DriveIcon /> },
  { name: "Android 上的 SD-1", icon: <DriveIcon /> },
  { name: "Android本地文件夹", icon: <PhoneIcon /> },
  { name: "Android的相册", icon: <AlbumIcon /> },
  { name: "Android的相机", icon: <CameraIcon /> },
];

function ComboArrow() {
  return (
    <span className={`pointer-events-none flex h-full items-center justify-center ${RAISED}`}>
      <Down />
    </span>
  );
}

function DialogTool({ label, children }: Kids & { label: string }) {
  return (
    <button aria-label={label} className="flex h-[24px] w-[26px] shrink-0 items-center justify-center">
      {children}
    </button>
  );
}

function LookInRow() {
  return (
    <div className="flex h-[31px] items-center">
      <label htmlFor="look-in" className="w-[111px] whitespace-nowrap pl-[20px] text-[13px] leading-[20px]">
        查找范围<Key k="I" />:
      </label>
      <div className={`grid h-[22px] w-[239px] grid-cols-[27px_1fr_17px] items-center ${SUNKEN}`}>
        <span className="col-start-1 row-start-1 flex justify-center">
          <Draw w={18} h={18}>
            <path d="M3 2l11-1-1 10-9 1z" fill="#3aa2ea" stroke="#4a7ab8" />
            <path d="M4 3l9-1-1 4-8 3z" fill="#8fd2f8" />
            <ellipse cx="9" cy="14.500" rx="5" ry="3" fill="#c9c8e6" />
          </Draw>
        </span>
        <select id="look-in" className="col-span-2 col-start-2 row-start-1 h-[18px] appearance-none bg-transparent text-[13px] leading-[18px] outline-none">
          <option>我的电脑</option>
        </select>
        <span className="pointer-events-none col-start-3 row-start-1 h-[18px]"><ComboArrow /></span>
      </div>
      <span className="w-[5px]" />
      <DialogTool label="后退">
        <Draw w={18} h={18}>
          <circle cx="9" cy="9" r="7.500" fill="#8fc79a" stroke="#3f6b50" strokeWidth="1.500" />
          <circle cx="9" cy="9" r="5.500" fill="#e6f3e8" />
          <path d="M8 5v3h5v2H8v3L4 9z" fill="#fff" stroke="#222" />
        </Draw>
      </DialogTool>
      <span className="flex w-[12px] justify-center"><Down /></span>
      <DialogTool label="向上一级">
        <Draw w={18} h={18}>
          <path d="M1 5h6l2 2h8v10H1z" fill="#fbd75e" stroke="#9a7a20" />
          <path d="M6 14c4 0 5-2 5-7H8l5-6 4 6h-3c0 6-2 8-8 9z" fill="#2aa83a" stroke="#1c6b26" />
        </Draw>
      </DialogTool>
      <Sep />
      <DialogTool label="搜索 Web">
        <Draw w={20} h={20}>
          <circle cx="9" cy="8" r="7.500" fill="#3f86d2" />
          <path d="M4 3c4-3 8-1 9 1l-4 4-2 5-4-4z" fill="#52b04a" />
          <circle cx="12" cy="11" r="4" fill="#dcecf8" stroke="#55738e" strokeWidth="1.500" />
          <path d="M15 14l4 5" stroke="#b98b52" strokeWidth="2.500" />
        </Draw>
      </DialogTool>
      <DialogTool label="删除">
        <Draw w={16} h={16}><path d="M1 2c5 4 9 8 13 13M14 1C9 5 5 9 2 15" stroke="#8f8c87" strokeWidth="2" /></Draw>
      </DialogTool>
      <DialogTool label="新建文件夹">
        <Draw w={18} h={16}><path d="M1 4h8l2-2h5v13H1z" fill="#bfbcb7" stroke="#aaa7a2" /></Draw>
      </DialogTool>
      <DialogTool label="视图">
        <Draw w={18} h={16}>
          <rect x="0.500" y="0.500" width="17" height="15" fill="#eef4fd" stroke="#3b66bb" />
          <path d="M0 0h18v4H0z" fill="#4d7fd4" />
          <path d="M3 6h3v2H3zM8 6h3v2H8zM13 6h3v2h-3zM3 9h3v2H3zM8 9h3v2H8zM13 9h3v2h-3zM3 12h3v2H3zM8 12h3v2H8zM13 12h3v2h-3z" fill="#3f6cbc" />
        </Draw>
      </DialogTool>
      <span className="flex w-[10px] justify-center"><Down /></span>
      <button className="ml-[4px] flex items-center gap-[3px] whitespace-nowrap text-[13px] leading-[20px]">
        <span>工具<Key k="L" /></span>
        <Down />
      </button>
    </div>
  );
}

function FileList() {
  return (
    <div className="flex h-[285px] overflow-hidden border-2 border-b border-r-[#eceae5] border-b-[#eceae5] border-l-[#6e6c69] border-t-[#6e6c69] bg-white">
      <ul className="-mt-[5px] grid flex-1 grid-cols-[140px_140px_140px] content-start">
        {FILES.map((f) => (
          <li key={f.name} className="flex h-[155px] flex-col items-center">
            <div className="flex h-[108px] w-[108px] items-center justify-center border border-[#d2d2d2]">{f.icon}</div>
            <span className="mt-[1px] whitespace-nowrap text-[13px] leading-[20px]"><Mixed text={f.name} /></span>
          </li>
        ))}
      </ul>
      <div className={`flex w-[17px] flex-col ${DOTTED}`}>
        <button aria-label="列表向上滚动" className={`flex h-[17px] items-center justify-center ${RAISED}`}><Up /></button>
        <span className="flex-1" />
        <div className={`h-[116px] ${RAISED}`} />
        <button aria-label="列表向下滚动" className={`flex h-[17px] items-center justify-center ${RAISED}`}><Down /></button>
      </div>
    </div>
  );
}

function InsertPictureDialog() {
  return (
    <section
      role="dialog"
      aria-label="插入图片"
      className="absolute left-[303px] top-[162px] flex h-[400px] w-[670px] flex-col border border-b-2 border-r-2 border-b-[#6b6966] border-l-[#d6d3ce] border-r-[#6b6966] border-t-[#d6d3ce] bg-[#d6d3ce] p-[2px] shadow-[inset_1px_1px_0_#fff]"
    >
      <div className="flex h-[21px] shrink-0 items-center bg-[#08246b] pl-[4px] pr-[2px]">
        <h2 className="flex-1 text-[14px] font-bold leading-[20px] text-white">插入图片</h2>
        <CaptionButton label="帮助">
          <b className="font-['Liberation_Sans',sans-serif] text-[13px] leading-[14px]">?</b>
        </CaptionButton>
        <span className="w-[3px]" />
        <CaptionButton label="关闭对话框"><Cross /></CaptionButton>
      </div>
      <LookInRow />
      <div className="flex flex-1 pl-[7px]">
        <div className="flex h-[337px] w-[96px] shrink-0 flex-col overflow-hidden border border-b-white border-l-[#848284] border-r-white border-t-[#848284]">
          <Place name="我最近的文档" icon={<RecentIcon />} />
          <Place name="桌面" icon={<DesktopIcon />} />
          <Place name="我的文档" icon={<DocsIcon />} />
          <Place name="我的电脑" icon={<Computer />} active />
          <button aria-label="网上邻居" className="flex flex-col items-center pt-[8px]">
            <Computer globe />
            <Down />
          </button>
        </div>
        <div className="ml-[6px] flex w-[548px] flex-col">
          <FileList />
          <div className="mt-[4px] grid grid-cols-[90px_333px_125px] gap-y-[5px]">
            <label htmlFor="file-name" className="whitespace-nowrap pl-[1px] text-[13px] leading-[16px]">文件名<Key k="N" />:</label>
            <div className={`flex h-[22px] items-center ${SUNKEN}`}>
              <span className="ml-[1px] h-[14px] w-px bg-black" />
              <input id="file-name" className="h-[18px] min-w-0 flex-1 bg-transparent text-[13px] leading-[18px] outline-none" />
              <span className="h-[18px] w-[17px]"><ComboArrow /></span>
            </div>
            <button disabled className={`ml-[25px] h-[22px] text-[13px] leading-[18px] text-[#949189] [text-shadow:1px_1px_0_#fff] ${RAISED}`}>
              插入<Key k="S" />
            </button>
            <label htmlFor="file-type" className="whitespace-nowrap pl-[1px] text-[13px] leading-[16px]">文件类型<Key k="T" />:</label>
            <div className={`grid h-[22px] grid-cols-[1fr_17px] ${SUNKEN}`}>
              <select id="file-type" className="col-span-2 col-start-1 row-start-1 h-[18px] appearance-none bg-transparent pl-[1px] text-[13px] leading-[18px] outline-none">
                <option>所有图片</option>
              </select>
              <span className="pointer-events-none col-start-2 row-start-1 h-[18px]"><ComboArrow /></span>
            </div>
            <button className="ml-[25px] h-[22px] border-2 border-[#33312e] bg-[#d6d3ce] text-[13px] leading-[17px] shadow-[inset_1px_1px_0_#fff]">取消</button>
          </div>
        </div>
      </div>
      <span className="absolute bottom-[1px] right-[1px]">
        <Draw w={12} h={12}><path d="M0 12L12 0M4 12l8-8M8 12l4-4" stroke="#6f7a6a" strokeWidth="1.600" /></Draw>
      </span>
      <span className="absolute left-[647px] top-[328px]">
        <Draw w={26} h={50}>
          <path d="M2 2v34l6-6 7 16 5-3-6-13h9z" fill="#fff" stroke="#333" strokeWidth="1.600" />
        </Draw>
      </span>
    </section>
  );
}

/* ---------- touch control strip ---------- */

function Metal() {
  return (
    <defs>
      <linearGradient id="metal" x1="0" y1="0" x2="0" y2="1">
        <stop offset="0" stopColor="#f0f0f0" />
        <stop offset="0.5" stopColor="#bdbdbd" />
        <stop offset="1" stopColor="#909090" />
      </linearGradient>
      <linearGradient id="edge" x1="0" y1="0" x2="0" y2="1">
        <stop offset="0" stopColor="#ffffff" />
        <stop offset="0.6" stopColor="#d0d0d0" />
        <stop offset="1" stopColor="#8a8a8a" />
      </linearGradient>
      <linearGradient id="body" x1="0" y1="0" x2="0" y2="1">
        <stop offset="0" stopColor="#cfcfcf" />
        <stop offset="0.6" stopColor="#b2b0af" />
        <stop offset="1" stopColor="#8c8c8a" />
      </linearGradient>
    </defs>
  );
}

function Pointer() {
  return (
    <>
      <path d="M4 2v42l9-9 8 18 9-4-8-17h11z" fill="url(#body)" stroke="url(#edge)" strokeWidth="2.400" />
      <path d="M4 45l9-9M21 54l9-4" stroke="#555" strokeWidth="1.500" strokeDasharray="4 1" />
    </>
  );
}

function TouchStrip() {
  const cell = "flex h-[60px] items-center justify-center";
  return (
    <div className="absolute inset-x-0 bottom-0 grid h-[86px] grid-cols-7 bg-[rgba(70,76,64,0.31)] pt-[13px]">
      <button aria-label="指针" className={`${cell} drop-shadow-[0_0_7px_#12c4f0]`}>
        <Draw w={36} h={58}><Metal /><Pointer /></Draw>
      </button>
      <button aria-label="放大指针" className={cell}>
        <Draw w={62} h={58}>
          <g transform="translate(29 0)"><Pointer /></g>
          <circle cx="13" cy="16" r="11" stroke="#d4d4d4" strokeWidth="2" />
          <path d="M13 10v12M7 16h12" stroke="#ededed" strokeWidth="4" />
        </Draw>
      </button>
      <button aria-label="键盘" className={cell}>
        <Draw w={72} h={56}>
          <path d="M7 11c0-6 3-6 8-6h46c5 0 6 0 7-5" stroke="#d4d4d4" strokeWidth="3" />
          <path d="M1 11h70v42H1z" fill="url(#metal)" />
          <path d="M1 54h70" stroke="#444" strokeWidth="2" />
          <path d="M7 16h58" stroke="#666" strokeWidth="2" />
          <path d="M8 25h56M8 33h56" stroke="#777" strokeWidth="2" />
          <path d="M8 20.500h56M8 29h56" stroke="#ededed" strokeWidth="6" strokeDasharray="7 1" />
          <path d="M8 40h56M8 48h56" stroke="#666" strokeWidth="2" strokeDasharray="6 2" />
        </Draw>
      </button>
      <button aria-label="移动" className={cell}>
        <Draw w={56} h={58}>
          <path d="M28 1l10 11h-7v15h13v-7l10 9-10 9v-7H31v15h7L28 57 18 46h7V31H12v7L2 29l10-9v7h13V12h-7z" fill="url(#metal)" />
          <path d="M18 12h7M31 12h7M12 31h12M32 31h12M2 29l10 9M18 46l10 11 10-11" stroke="#555" strokeWidth="1.500" />
        </Draw>
      </button>
      <button aria-label="应用" className={cell}>
        <span className="relative">
          <Draw w={54} h={54}>
            <rect x="2" y="3" width="21" height="22" rx="3" fill="#b8b8b8" stroke="#f0f0f0" strokeWidth="3" />
            <path d="M7 9h11v11H7z" fill="#a9a9a7" stroke="#c8c8c8" />
            <path d="M7 9h11" stroke="#555" strokeWidth="2" />
            <rect x="28" y="2" width="25" height="24" rx="3" fill="#e6e6e6" />
            <rect x="2" y="30" width="21" height="21" rx="3" fill="#9d9d9b" stroke="#b0b0ae" strokeWidth="3" />
            <path d="M7 35h11" stroke="#555" strokeWidth="2" />
            <rect x="28" y="29" width="25" height="23" rx="3" fill="#989896" />
            <path d="M3 53h19M30 53h20" stroke="#4a4a48" strokeWidth="2" />
          </Draw>
          <span className="absolute -top-[3px] right-0 flex h-[32px] w-[32px] items-center justify-center rounded-full border-2 border-[#f2dede] bg-[radial-gradient(circle_at_50%_20%,#f58080,#d8181c_55%,#a80c10)] font-['Roboto',sans-serif] text-[18px] font-bold leading-[20px] text-white shadow-[0_2px_2px_#333]">
            2
          </span>
        </span>
      </button>
      <button aria-label="菜单" className={cell}>
        <Draw w={60} h={56}>
          <rect x="1" y="2" width="58" height="10" rx="2" fill="#c4c4c4" stroke="#ededed" strokeWidth="2.500" />
          <rect x="1" y="23" width="58" height="9" rx="2" fill="#a9a9a9" stroke="#d8d8d8" strokeWidth="2" />
          <rect x="0" y="40" width="60" height="14" fill="#929190" />
          <path d="M0 14h60M0 34h60M0 55h60" stroke="#4b4b49" strokeWidth="2" />
        </Draw>
      </button>
      <button aria-label="返回" className={cell}>
        <Draw w={56} h={54}>
          <path d="M1 17h14v7h-5l-2 22h40l-2-22h-5v-7h14v36H1z" fill="url(#metal)" />
          <path d="M10 24h36l2 22H8z" fill="#b2b0ad" />
          <path d="M19 4v18h19l-4-4c1-8 8-12 19-14C44-1 32 0 25 9z" fill="#cfcfcf" stroke="#f0f0f0" strokeWidth="1.500" />
          <path d="M9 24.500h6M18 24.500h20M41 24.500h6M1 53h54" stroke="#484846" strokeWidth="2" />
        </Draw>
      </button>
    </div>
  );
}

function TaskBar() {
  return (
    <div className="flex h-[24px] shrink-0 items-center justify-end bg-[#848284] pr-[14px]">
      <Draw w={20} h={22} label="Office">
        <path d="M3 4h5v7H3z" stroke="#f0683e" strokeWidth="2" />
        <path d="M11 8V4h5v4" stroke="#58a4e0" strokeWidth="2" />
        <path d="M4 14h5v6H4z" stroke="#d8c63c" strokeWidth="2" />
        <path d="M11 13h6v4h-6z" stroke="#a8c43c" strokeWidth="2" />
      </Draw>
    </div>
  );
}

export default function App() {
  return (
    <div className={`relative flex h-screen flex-col overflow-hidden bg-black text-black ${CN}`}>
      <DeviceBar />
      <div className="mr-[3px] flex min-h-0 flex-1 flex-col bg-[#d6d3ce]">
        <TitleBar />
        <MenuBar />
        <ToolBar />
        <div className="flex min-h-0 flex-1 flex-col border-l-2 border-[#777572]">
          <WorkArea />
          <ViewBar />
        </div>
        <StatusBar />
        <TaskBar />
      </div>
      <InsertPictureDialog />
      <TouchStrip />
    </div>
  );
}
